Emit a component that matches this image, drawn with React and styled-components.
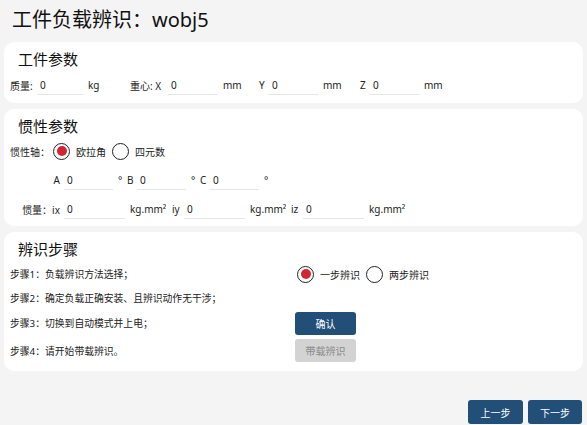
import React, { useState } from 'react'
import styled, { createGlobalStyle } from 'styled-components'

const GlobalStyle = createGlobalStyle`
  html, body {
    margin: 0;
    padding: 0;
    background: #f4f4f4;
  }
  body {
    font-family: "Noto Sans", "Noto Sans CJK SC", sans-serif;
    color: #222;
  }
`

const Page = styled.div`
  width: 587px;
  height: 425px;
  box-sizing: border-box;
  padding: 0 4px;
  display: flex;
  flex-direction: column;
  overflow: hidden;
`

const Title = styled.h1`
  margin: 5px 0 7px 8px;
  height: 30px;
  line-height: 30px;
  font-size: 20px;
  font-weight: 400;
  color: #111;
`

const Card = styled.section`
  background: #fff;
  border-radius: 10px;
  padding: 6px 6px ${p => p.$bottom || 6}px;
  margin-bottom: 6px;
  display: flex;
  flex-direction: column;
`

const Heading = styled.h2`
  margin: 0 0 ${p => p.$gap || 3}px 8px;
  height: 22px;
  line-height: 22px;
  font-size: 15px;
  font-weight: 400;
  color: #111;
`

const Row = styled.div`
  display: flex;
  align-items: center;
  height: ${p => p.$h || 22}px;
  margin-top: ${p => p.$top || 0}px;
  font-size: 10px;
  color: #222;
  white-space: nowrap;
`

const Label = styled.span`
  width: ${p => p.$w}px;
  flex: none;
  text-align: ${p => (p.$right ? 'right' : 'left')};
  padding-right: ${p => (p.$right ? 4 : 0)}px;
  box-sizing: border-box;
`

const Input = styled.input`
  width: ${p => p.$w}px;
  flex: none;
  box-sizing: border-box;
  height: 20px;
  border: none;
  border-bottom: 1px solid #e6e6e6;
  outline: none;
  background: transparent;
  padding: 0 0 0 3px;
  font: inherit;
  font-size: 10px;
  color: #222;
`

const Unit = styled.span`
  width: ${p => (p.$w ? `${p.$w}px` : 'auto')};
  flex: none;
  margin-left: 5px;
`

const RadioGroup = styled.div`
  display: flex;
  align-items: center;
  gap: 6px;
`

const RadioItem = styled.label`
  display: flex;
  align-items: center;
  gap: 6px;
  cursor: pointer;
`

const Circle = styled.span`
  width: 17px;
  height: 17px;
  box-sizing: border-box;
  border-radius: 50%;
  border: 1.5px solid #222;
  display: flex;
  align-items: center;
  justify-content: center;
  &::after {
    content: '';
    width: 10px;
    height: 10px;
    border-radius: 50%;
    background: ${p => (p.$on ? '#d12634' : 'transparent')};
  }
`

const StepText = styled.span`
  width: 285px;
  flex: none;
  font-size: 9.8px;
  color: #222;
`

const StepSide = styled.div`
  display: flex;
  align-items: center;
  padding-left: ${p => p.$pad || 0}px;
`

const Button = styled.button`
  width: ${p => p.$w || 61}px;
  height: ${p => p.$h || 23}px;
  border: none;
  border-radius: 3px;
  font-family: inherit;
  font-size: 10px;
  color: ${p => (p.disabled ? '#8a8a8a' : '#fff')};
  background: ${p => (p.disabled ? '#d3d3d3' : '#224f78')};
  cursor: ${p => (p.disabled ? 'default' : 'pointer')};
  padding: 0;
`

const Footer = styled.div`
  display: flex;
  justify-content: flex-end;
  gap: 5px;
  margin-top: 23px;
  padding-right: 1px;
`

function Radio({ options, value, onChange }) {
  return (
    <RadioGroup>
      {options.map(o => (
        <RadioItem key={o} onClick={() => onChange(o)}>
          <Circle $on={value === o} />
          <span>{o}</span>
        </RadioItem>
      ))}
    </RadioGroup>
  )
}

export default function App() {
  const [axis, setAxis] = useState('欧拉角')
  const [mode, setMode] = useState('一步辨识')

  return (
    <>
      <GlobalStyle />
      <Page>
        <Title>工件负载辨识：wobj5</Title>

        <Card $bottom={7}>
          <Heading $gap={4}>工件参数</Heading>
          <Row>
            <Label $w={27}>质量:</Label>
            <Input $w={46} defaultValue="0" />
            <Unit $w={42}>kg</Unit>
            <Label $w={38}>重心: X</Label>
            <Input $w={50} defaultValue="0" />
            <Unit $w={36}>mm</Unit>
            <Label $w={10}>Y</Label>
            <Input $w={49} defaultValue="0" />
            <Unit $w={37}>mm</Unit>
            <Label $w={10}>Z</Label>
            <Input $w={49} defaultValue="0" />
            <Unit>mm</Unit>
          </Row>
        </Card>

        <Card>
          <Heading>惯性参数</Heading>
          <Row>
            <Label $w={43}>惯性轴：</Label>
            <Radio options={['欧拉角', '四元数']} value={axis} onChange={setAxis} />
          </Row>
          <Row $top={7}>
            <Label $w={54} $right>A</Label>
            <Input $w={49} defaultValue="0" />
            <Unit $w={9}>°</Unit>
            <Label $w={10}>B</Label>
            <Input $w={49} defaultValue="0" />
            <Unit $w={9}>°</Unit>
            <Label $w={10}>C</Label>
            <Input $w={49} defaultValue="0" />
            <Unit>°</Unit>
          </Row>
          <Row $top={7}>
            <Label $w={54} $right>惯量：ix</Label>
            <Input $w={61} defaultValue="0" />
            <Unit $w={42}>kg.mm²</Unit>
            <Label $w={12}>iy</Label>
            <Input $w={61} defaultValue="0" />
            <Unit $w={41}>kg.mm²</Unit>
            <Label $w={12}>iz</Label>
            <Input $w={61} defaultValue="0" />
            <Unit>kg.mm²</Unit>
          </Row>
        </Card>

        <Card $bottom={7}>
          <Heading $gap={2}>辨识步骤</Heading>
          <Row $h={24}>
            <StepText>步骤1：负载辨识方法选择；</StepText>
            <StepSide $pad={2}>
              <Radio options={['一步辨识', '两步辨识']} value={mode} onChange={setMode} />
            </StepSide>
          </Row>
          <Row $h={24}>
            <StepText>步骤2：确定负载正确安装、且辨识动作无干涉；</StepText>
          </Row>
          <Row $h={26}>
            <StepText>步骤3：切换到自动模式并上电；</StepText>
            <StepSide>
              <Button>确认</Button>
            </StepSide>
          </Row>
          <Row $h={27} $top={1}>
            <StepText>步骤4：请开始带载辨识。</StepText>
            <StepSide>
              <Button disabled>带载辨识</Button>
            </StepSide>
          </Row>
        </Card>

        <Footer>
          <Button $w={55} $h={24}>上一步</Button>
          <Button $w={54} $h={24}>下一步</Button>
        </Footer>
      </Page>
    </>
  )
}
